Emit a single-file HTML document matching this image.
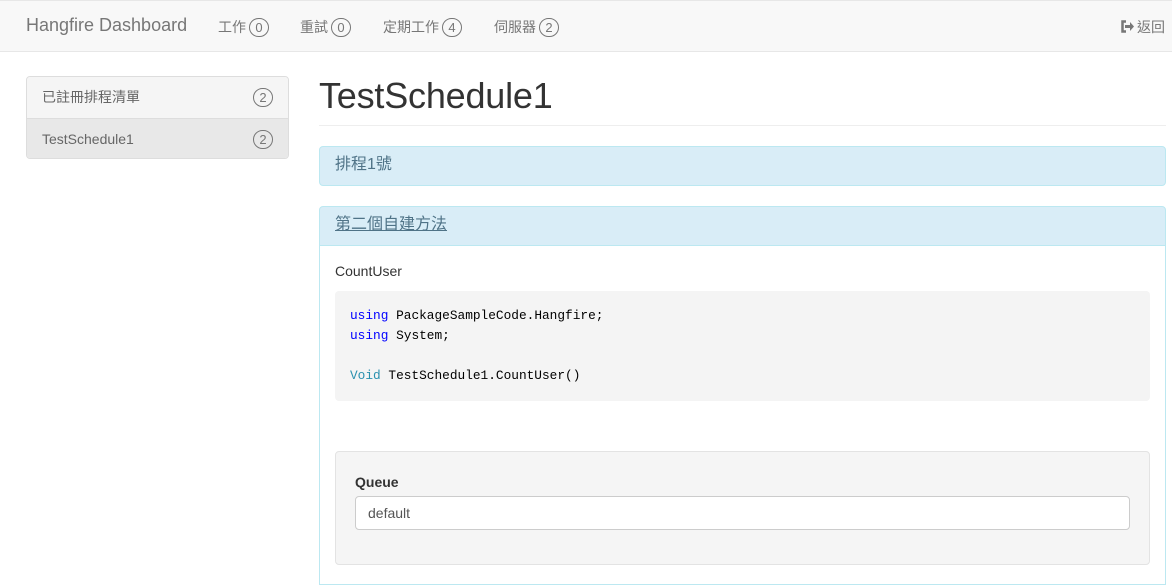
<!DOCTYPE html>
<html><head><meta charset="utf-8"><style>
*{box-sizing:border-box;margin:0;padding:0}
body{width:1172px;height:578px;overflow:hidden;background:#fff;font-family:"Liberation Sans","Noto Sans CJK TC",sans-serif;font-size:14px;color:#333;position:relative}
.nav{position:absolute;left:0;top:0;width:1172px;height:52px;background:#f8f8f8;border-bottom:1px solid #e7e7e7;border-top:1px solid #e7e7e7}
.nav span{position:absolute;top:16px;color:#777;font-size:14px;line-height:20px}
.brand{font-size:18px!important;top:14px!important}
.b{display:inline-block;border:1px solid #777;border-radius:10px;width:20px;height:19px;line-height:17px;text-align:center;font-size:13px;margin-left:3px;color:#777;font-style:normal}
.side{position:absolute;left:26px;top:76px;width:263px;border:1px solid #ddd;border-radius:4px;overflow:hidden}
.side div{height:41px;line-height:41px;padding-left:15px;color:#666;position:relative}
.side div .b{position:absolute;right:15px;top:11px;line-height:17px}
h1{position:absolute;left:319px;top:75px;font-size:36px;font-weight:400;color:#333;letter-spacing:-0.2px}
.hr{position:absolute;left:319px;top:125px;width:847px;border-top:1px solid #eee}
.ph{position:absolute;left:319px;width:847px;height:40px;background:#d9edf7;border:1px solid #bce8f1;border-radius:4px;color:#4f7387;font-size:16px;padding:8px 15px;line-height:20px}
.pb{position:absolute;left:319px;top:245px;width:847px;height:340px;border:1px solid #bce8f1;border-top:none}
pre{position:absolute;left:335px;top:291px;width:815px;height:110px;background:#f4f4f4;border-radius:4px;padding:15px 15px;font-family:"Liberation Mono",monospace;font-size:12.8px;line-height:20px;color:#000}
.well{position:absolute;left:335px;top:451px;width:815px;height:114px;background:#f5f5f5;border:1px solid #e3e3e3;border-radius:4px}
input{position:absolute;left:19px;top:44px;width:775px;height:34px;border:1px solid #ccc;border-radius:4px;background:#fff;padding:0 12px;font-size:14px;color:#555;font-family:inherit}
</style></head><body>
<div class="nav">
<span class="brand" style="left:26px">Hangfire Dashboard</span>
<span style="left:218px">工作<i class="b">0</i></span>
<span style="left:300px">重試<i class="b">0</i></span>
<span style="left:383px">定期工作<i class="b">4</i></span>
<span style="left:494px">伺服器<i class="b">2</i></span>
<span style="left:1120px"><svg width="15" height="13" viewBox="0 0 15 13" style="vertical-align:-1px;margin-right:2px"><path d="M6 1.5H2.5v10H6" fill="none" stroke="#777" stroke-width="2.5"/><path d="M5 5h5V2l4 4.5-4 4.5V8H5z" fill="#777"/></svg>返回</span>
</div>
<div class="side">
<div style="background:#f5f5f5">已註冊排程清單<span class="b">2</span></div>
<div style="background:#e8e8e8;border-top:1px solid #ddd;height:40px;line-height:40px">TestSchedule1<span class="b" style="top:11px">2</span></div>
</div>
<h1>TestSchedule1</h1>
<div class="hr"></div>
<div class="ph" style="top:146px">排程1號</div>
<div class="ph" style="top:206px;height:40px;border-radius:4px 4px 0 0"><u>第二個自建方法</u></div>
<div class="pb"></div>
<div style="position:absolute;left:335px;top:263px">CountUser</div>
<pre><span style="color:#00f">using</span> PackageSampleCode.Hangfire;
<span style="color:#00f">using</span> System;

<span style="color:#2b91af">Void</span> TestSchedule1.CountUser()</pre>
<div class="well"><b style="position:absolute;left:19px;top:22px">Queue</b><input value="default"></div>
</body></html>
